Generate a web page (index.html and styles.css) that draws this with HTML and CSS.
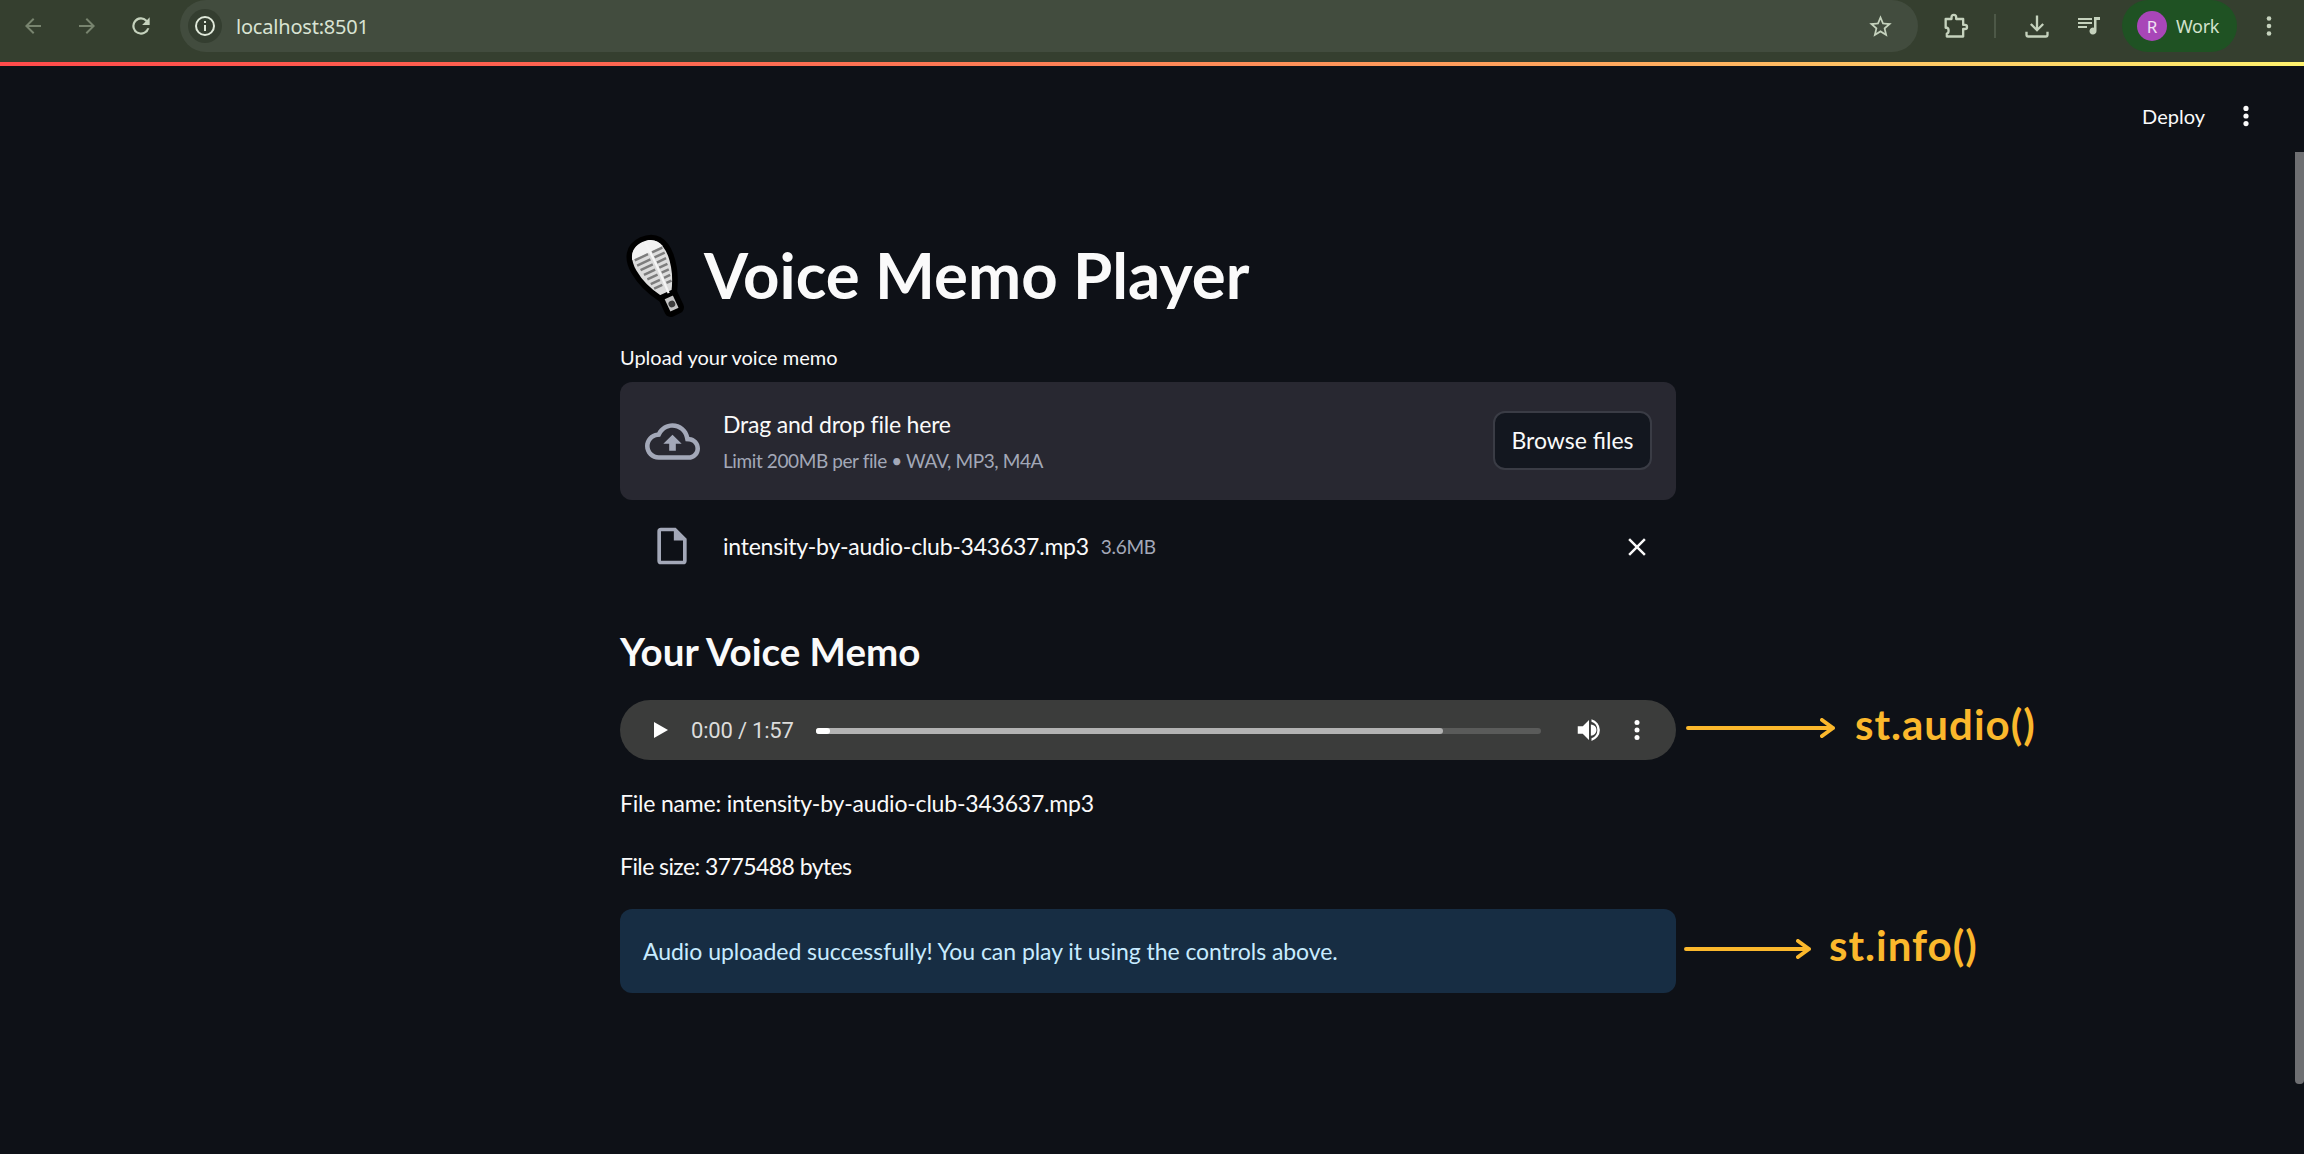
FILE: index.html
```html
<!DOCTYPE html>

<html>
<head>
    <title>Voice Memo Player</title>
    <link rel="stylesheet" href="styles.css">
</head>

<body>
    <div class="toolbar">
        <svg class="tb_icon dim" viewBox="0 0 24 24"><path d="M20 11H7.8l5.6-5.6L12 4l-8 8 8 8 1.4-1.4L7.8 13H20z"/></svg>
        <svg class="tb_icon dim" viewBox="0 0 24 24"><path d="M4 11h12.2l-5.6-5.6L12 4l8 8-8 8-1.4-1.4 5.6-5.6H4z"/></svg>
        <svg class="tb_icon reload" viewBox="0 0 24 24"><path d="M17.65 6.35A8 8 0 1 0 19.73 14h-2.08A6 6 0 1 1 12 6c1.66 0 3.14.69 4.22 1.78L13 11h7V4z"/></svg>

        <div class="omnibox">
            <span class="site_info">
                <svg viewBox="0 0 24 24"><path d="M12 2a10 10 0 1 0 0 20 10 10 0 0 0 0-20zm0 18a8 8 0 1 1 0-16 8 8 0 0 1 0 16zm-1-9h2v6h-2zm0-4h2v2h-2z"/></svg>
            </span>
            <span class="url">localhost:8501</span>
            <svg class="star" viewBox="0 0 24 24"><path d="M22 9.2l-7.2-.6L12 2 9.2 8.6 2 9.2l5.5 4.7L5.8 21l6.200-3.700 6.200 3.700-1.700-7.100zM12 15.400l-3.800 2.300 1-4.300-3.300-2.900 4.400-.4L12 6.100l1.700 4 4.400.4-3.300 2.900 1 4.300z"/></svg>
        </div>

        <svg class="tb_icon ext" viewBox="0 0 24 24"><path fill="none" stroke="currentColor" stroke-width="2" stroke-linejoin="round" d="M4 6h5V4.500a2 2 0 0 1 4 0V6h6v5h1.500a1.800 1.800 0 0 1 0 3.600H19V21H5v-2.500c2-.5 2-4.500 0-5H4z"/></svg>
        <span class="tb_sep"></span>
        <svg class="tb_icon dl" viewBox="0 0 24 24"><path d="M13 3v10.200l3.600-3.600L18 11l-6 6-6-6 1.400-1.400L11 13.200V3zM2 17h2v2.500c0 .3.200.5.500.5h15c.3 0 .5-.2.500-.5V17h2v2.500a2.500 2.500 0 0 1-2.500 2.500h-15A2.500 2.500 0 0 1 2 19.500z"/></svg>
        <svg class="tb_icon media" viewBox="0 0 24 24"><path d="M1 4h14v2H1zm0 4h14v2H1zm0 4h9v2H1zm16-9h6v3h-3.500v11a3.500 3.500 0 1 1-2.500-3.300z"/></svg>
        <div class="profile">
            <span class="avatar">R</span>
            <span>Work</span>
        </div>
        <svg class="tb_icon kebab" viewBox="0 0 24 24"><circle cx="12" cy="4.500" r="2.300"/><circle cx="12" cy="12" r="2.300"/><circle cx="12" cy="19.500" r="2.300"/></svg>
    </div>
    <div class="load_line"></div>

    <div class="app">
        <div class="app_view">
            <div class="app_header">
                <span class="deploy">Deploy</span>
                <svg class="app_menu" viewBox="0 0 24 24"><circle cx="12" cy="5" r="2.400"/><circle cx="12" cy="12" r="2.400"/><circle cx="12" cy="19" r="2.400"/></svg>
            </div>

            <div class="block">
                <h1 class="title">
                    <svg class="mic" viewBox="-1 4 60 71">
                        <g transform="rotate(-25 33 41)">
                            <rect x="27" y="56" width="13" height="20" rx="3" fill="#c4c4c4" stroke="#000" stroke-width="5"/>
                            <path d="M33 5C19 5 14 15 15 28c1 12 6 23 11 31h14c5-8 10-19 11-31C52 15 47 5 33 5z" fill="#dcdcdc" stroke="#000" stroke-width="5"/>
                            <path d="M33 7c8 0 13 4 15 11H18c2-7 7-11 15-11z" fill="#f2f2f2"/>
                            <path class="grille" d="M20 19h13M20 24h13M21 29h12M22 34h11M23 39h10M24 44h9M25 49h8"/>
                            <path class="grille" d="M37 19h10M37 24h10M37 29h9M37 34h8M37 39h7M37 44h6M37 49h5"/>
                            <path d="M35 8c1 15 1 30 0 50" fill="none" stroke="#f5f5f5" stroke-width="2"/>
                            <circle cx="33.500" cy="68" r="3" fill="#3c3c3c"/>
                        </g>
                    </svg>
                    Voice Memo Player
                </h1>

                <div class="widget_label">Upload your voice memo</div>

                <div class="uploader">
                    <svg class="cloud" viewBox="0 0 24 16"><path d="M19.350 6.040C18.670 2.590 15.640 0 12 0 9.110 0 6.600 1.640 5.350 4.040 2.340 4.360 0 6.910 0 10c0 3.310 2.690 6 6 6h13c2.760 0 5-2.240 5-5 0-2.640-2.050-4.780-4.650-4.960zM19 14H6c-2.210 0-4-1.790-4-4 0-2.050 1.530-3.760 3.560-3.970l1.070-.11.500-.95C8.080 3.140 9.940 2 12 2c2.620 0 4.880 1.860 5.390 4.430l.300 1.500 1.530.11c1.560.100 2.780 1.410 2.780 2.960 0 1.650-1.350 3-3 3zM8 9h2.550v3h2.900V9H16l-4-4z"/></svg>
                    <div class="drop_text">
                        <div class="drop_title">Drag and drop file here</div>
                        <div class="drop_limit">Limit 200MB per file • WAV, MP3, M4A</div>
                    </div>
                    <button class="browse">Browse files</button>
                </div>

                <div class="file_row">
                    <svg class="file_icon" viewBox="0 0 24 24"><path d="M14 2H6a2 2 0 0 0-2 2v16a2 2 0 0 0 2 2h12a2 2 0 0 0 2-2V8zm4 18H6V4h7v5h5z"/></svg>
                    <span class="file_name">intensity-by-audio-club-343637.mp3</span>
                    <span class="file_size">3.6MB</span>
                    <svg class="file_remove" viewBox="0 0 24 24"><path d="M19 6.400L17.600 5 12 10.600 6.400 5 5 6.400 10.600 12 5 17.600 6.400 19 12 13.400 17.600 19 19 17.600 13.400 12z"/></svg>
                </div>

                <h2 class="subheader">Your Voice Memo</h2>

                <div class="audio">
                    <svg class="play" viewBox="0 0 14 16"><path d="M0 0l14 8-14 8z"/></svg>
                    <span class="time">0:00 / 1:57</span>
                    <div class="track">
                        <div class="track_buffer"><div class="track_played"></div></div>
                    </div>
                    <svg class="volume" viewBox="0 0 24 24"><path d="M3 9v6h4l5 5V4L7 9zm10.500-1.500v9a4.500 4.500 0 0 0 0-9z"/><path d="M14 3.300v2.100a7 7 0 0 1 0 13.200v2.100a9 9 0 0 0 0-17.400z"/></svg>
                    <svg class="audio_menu" viewBox="0 0 24 24"><circle cx="12" cy="4.500" r="2.500"/><circle cx="12" cy="12" r="2.500"/><circle cx="12" cy="19.500" r="2.500"/></svg>

                    <div class="callout callout_audio">
                        <svg class="arrow" width="150" height="20" viewBox="0 0 150 20"><path d="M2 10h145M136 2l11 8-11 8"/></svg>
                        <span class="callout_text">st.audio()</span>
                    </div>
                </div>

                <p class="line line_name">File name: intensity-by-audio-club-343637.mp3</p>
                <p class="line line_size">File size: 3775488 bytes</p>

                <div class="info">
                    Audio uploaded successfully! You can play it using the controls above.
                    <div class="callout callout_info">
                        <svg class="arrow" width="128" height="20" viewBox="0 0 128 20"><path d="M2 10h123M114 2l11 8-11 8"/></svg>
                        <span class="callout_text">st.info()</span>
                    </div>
                </div>
            </div>
        </div>
        <div class="scroll_track"><div class="scroll_thumb"></div></div>
    </div>
</body>
</html>
```

FILE: styles.css
```css
html, body {
	margin: 0;
	height: 100%;
	overflow: hidden;
}

body {
	display: flex;
	flex-direction: column;
	background-color: #0e1117;
	color: #fafafa;
	font-family: "Lato", "Noto Sans", sans-serif;
}

/* browser chrome */
.toolbar {
	flex: none;
	height: 62px;
	display: flex;
	align-items: flex-start;
	background-color: #353f2f;
	color: #c5d2bd;
	font-family: "Noto Sans", sans-serif;
}

.tb_icon {
	flex: none;
	width: 24px;
	height: 24px;
	margin: 14px 0 0 21px;
	fill: currentColor;
}

.tb_icon.dim {
	color: #78846f;
	margin-right: 9px;
}

.tb_icon.dim + .tb_icon.dim {
	margin-left: 21px;
	margin-right: 0;
}

.tb_icon.reload {
	width: 26px;
	height: 26px;
	margin: 13px -1px 0 29px;
}

.omnibox {
	flex: none;
	width: 1738px;
	height: 52px;
	margin-left: 27px;
	display: flex;
	align-items: center;
	background-color: #424c3e;
	border-radius: 26px;
	box-sizing: border-box;
	padding: 0 24px 0 8px;
}

.site_info {
	width: 34px;
	height: 34px;
	border-radius: 50%;
	background-color: #343e30;
	display: flex;
	align-items: center;
	justify-content: center;
}

.site_info svg {
	width: 24px;
	height: 24px;
	fill: #dfe8d9;
}

.url {
	margin-left: 14px;
	font-size: 20px;
	letter-spacing: -0.2px;
	color: #d9e3d3;
	flex: 1;
}

.star {
	width: 27px;
	height: 27px;
	fill: #c5d2bd;
}

.tb_icon.ext {
	width: 28px;
	height: 28px;
	margin: 12px 0 0 23px;
}

.tb_sep {
	flex: none;
	width: 2px;
	height: 24px;
	margin: 14px 0 0 25px;
	background-color: #4d5847;
}

.tb_icon.dl {
	width: 28px;
	height: 28px;
	margin: 12px 0 0 27px;
}

.tb_icon.media {
	margin: 14px 0 0 26px;
}

.profile {
	flex: none;
	width: 115px;
	height: 52px;
	margin-left: 21px;
	display: flex;
	align-items: center;
	box-sizing: border-box;
	padding-left: 15px;
	gap: 9px;
	background-color: #1f5223;
	border-radius: 26px;
	font-size: 18px;
	letter-spacing: -0.3px;
	color: #d3e2cd;
}

.avatar {
	width: 30px;
	height: 30px;
	border-radius: 50%;
	background-color: #a846b8;
	color: #f0e0f2;
	font-size: 17px;
	display: flex;
	align-items: center;
	justify-content: center;
}

.tb_icon.kebab {
	margin: 14px 0 0 20px;
}

.load_line {
	flex: none;
	height: 4px;
	background: linear-gradient(90deg, #ff4b4b, #fd6e52 35%, #ffa95e 70%, #fff36e);
}

/* streamlit page */
.app {
	flex: 1;
	display: flex;
	min-height: 0;
}

.app_view {
	flex: 1;
	min-width: 0;
}

.scroll_track {
	flex: none;
	width: 8px;
}

.scroll_thumb {
	width: 9px;
	height: 932px;
	margin: 86px 0 0 -1px;
	border-radius: 0 0 4px 4px;
	background-color: #6e6f72;
}

.app_header {
	height: 100px;
	display: flex;
	align-items: center;
	justify-content: flex-end;
}

.deploy {
	font-size: 20px;
	margin-right: 28px;
}

.app_menu {
	width: 26px;
	height: 26px;
	margin-right: 37px;
	fill: #fafafa;
}

.block {
	width: 1056px;
	margin: 0 auto;
}

.title {
	height: 80px;
	margin: 70px 0 0;
	box-sizing: border-box;
	padding-bottom: 3px;
	display: flex;
	align-items: center;
	gap: 16px;
	font-size: 63.500px;
	font-weight: 700;
}

.mic {
	width: 68px;
	height: 80px;
	flex: none;
	overflow: visible;
}

.grille {
	fill: none;
	stroke: #7d7d7d;
	stroke-width: 2.200;
}

.widget_label {
	height: 30px;
	line-height: 30px;
	margin-top: 26px;
	font-size: 20px;
}

.uploader {
	height: 118px;
	margin-top: 10px;
	display: flex;
	align-items: center;
	box-sizing: border-box;
	padding: 0 24px 0 25px;
	background-color: #282831;
	border-radius: 12px;
}

.cloud {
	flex: none;
	width: 55px;
	height: 37px;
	fill: #a3a8b8;
}

.drop_text {
	flex: 1;
	margin-left: 23px;
}

.drop_title {
	font-size: 23px;
	line-height: 34px;
	letter-spacing: -0.2px;
}

.drop_limit {
	margin-top: 5px;
	font-size: 19px;
	line-height: 30px;
	letter-spacing: -0.4px;
	color: #a3a8b8;
}

.browse {
	width: 159px;
	height: 59px;
	margin-bottom: 2px;
	background-color: #13171f;
	border: 2px solid #3a3c45;
	border-radius: 12px;
	color: #fafafa;
	font-family: inherit;
	font-size: 23px;
}

.file_row {
	height: 60px;
	margin-top: 16px;
	display: flex;
	align-items: center;
	box-sizing: border-box;
	padding: 0 24px 0 30px;
}

.file_icon {
	flex: none;
	width: 44px;
	height: 44px;
	fill: #a3a8b8;
}

.file_name {
	margin-left: 29px;
	font-size: 23px;
	letter-spacing: -0.24px;
}

.file_size {
	flex: 1;
	margin-left: 12px;
	font-size: 19px;
	letter-spacing: -0.3px;
	color: #a3a8b8;
}

.file_remove {
	flex: none;
	width: 30px;
	height: 30px;
	margin-top: 2px;
	fill: #fafafa;
}

.subheader {
	height: 50px;
	line-height: 50px;
	margin: 50px 0 0;
	font-size: 38.500px;
	font-weight: 700;
}

.audio {
	position: relative;
	height: 60px;
	margin-top: 24px;
	display: flex;
	align-items: center;
	background-color: #3b3c3b;
	border-radius: 30px;
}

.play {
	flex: none;
	width: 14px;
	height: 16px;
	margin-left: 34px;
	fill: #ffffff;
}

.time {
	flex: none;
	width: 125px;
	margin-left: 23px;
	font-family: "Roboto", "Liberation Sans", sans-serif;
	font-size: 22px;
	color: #dcdcdc;
	letter-spacing: -0.2px;
}

.track {
	flex: none;
	width: 725px;
	height: 6px;
	margin-top: 2px;
	border-radius: 3px;
	background-color: #5a5b5a;
}

.track_buffer {
	width: 86.500%;
	height: 100%;
	border-radius: 3px;
	background-color: #b3b3b3;
}

.track_played {
	width: 14px;
	height: 100%;
	border-radius: 3px;
	background-color: #ffffff;
}

.volume {
	flex: none;
	width: 30px;
	height: 30px;
	margin-left: 33px;
	fill: #ffffff;
}

.audio_menu {
	flex: none;
	width: 24px;
	height: 24px;
	margin-left: 21px;
	fill: #ffffff;
}

.line {
	height: 34px;
	line-height: 34px;
	margin: 0;
	font-size: 23px;
}

.line_name {
	margin-top: 26px;
	letter-spacing: -0.2px;
}

.line_size {
	margin-top: 29px;
	letter-spacing: -0.58px;
}

.info {
	position: relative;
	height: 84px;
	margin-top: 26px;
	box-sizing: border-box;
	padding: 0 23px;
	line-height: 84px;
	font-size: 23px;
	letter-spacing: -0.05px;
	background-color: #172d43;
	color: #c7ebff;
	border-radius: 12px;
}

/* hand written notes next to the widgets */
.callout {
	position: absolute;
	left: 100%;
	display: flex;
	align-items: center;
	color: #fbb82c;
	line-height: 40px;
}

.callout_audio {
	top: 4px;
	margin-left: 10px;
}

.callout_info {
	top: 16px;
	margin-left: 8px;
}

.arrow {
	flex: none;
}

.arrow path {
	fill: none;
	stroke: currentColor;
	stroke-width: 4;
	stroke-linecap: round;
	stroke-linejoin: round;
}

.callout_text {
	margin: 0 0 8px 19px;
	font-size: 42px;
	font-weight: 700;
	letter-spacing: 1px;
}

.callout_info .callout_text {
	margin-left: 17px;
}
```
